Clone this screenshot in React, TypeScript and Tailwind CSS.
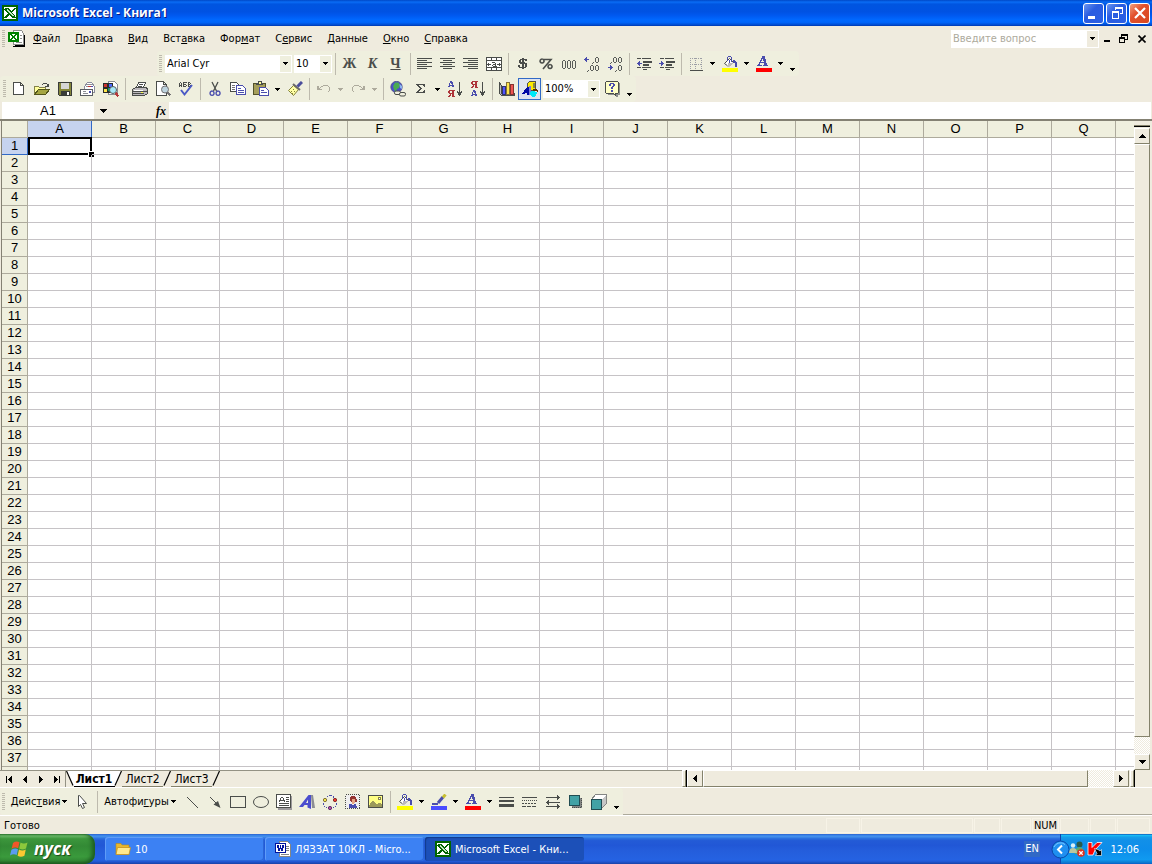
import React from "react";

const COLS = "ABCDEFGHIJKLMNOPQ".split("");
const ROWS = Array.from({ length: 37 }, (_, i) => i + 1);

type Kids = { children?: React.ReactNode };

function Ico({ children, smooth, size = 16 }: Kids & { smooth?: boolean; size?: number }) {
  return (
    <svg
      width={size}
      height={size}
      viewBox="0 0 16 16"
      fill="none"
      shapeRendering={smooth ? "auto" : "crispEdges"}
      aria-hidden="true"
      className="shrink-0"
    >
      {children}
    </svg>
  );
}

function Caret({ color = "#000" }: { color?: string }) {
  return (
    <svg width="5" height="3" viewBox="0 0 5 3" shapeRendering="crispEdges" aria-hidden="true" className="shrink-0">
      <path fill={color} d="M0 0h5v1h-5zM1 1h3v1h-3zM2 2h1v1h-1z" />
    </svg>
  );
}

function Tri({ dir }: { dir: "up" | "down" | "left" | "right" }) {
  const d = {
    up: "M3 0h1v1h-1zM2 1h3v1h-3zM1 2h5v1h-5zM0 3h7v1h-7z",
    down: "M0 0h7v1h-7zM1 1h5v1h-5zM2 2h3v1h-3zM3 3h1v1h-1z",
    left: "M0 3h1v1h-1zM1 2h1v3h-1zM2 1h1v5h-1zM3 0h1v7h-1z",
    right: "M3 3h1v1h-1zM2 2h1v3h-1zM1 1h1v5h-1zM0 0h1v7h-1z",
  }[dir];
  const wide = dir === "up" || dir === "down";
  return (
    <svg width={wide ? 7 : 4} height={wide ? 4 : 7} shapeRendering="crispEdges" aria-hidden="true" className="shrink-0">
      <path fill="#000" d={d} />
    </svg>
  );
}

function ExcelMark({ size = 16 }: { size?: number }) {
  return (
    <Ico size={size}>
      <path fill="#006500" d="M0 0h16v16h-16z" />
      <path fill="#fff" d="M2 2h12v12h-12z" />
      <path fill="#006500" d="M3 3h4v1h1v1h1v1h1v-1h1v-1h1v-1h2v1h-1v1h-1v1h-1v1h-1v1h1v1h1v1h1v2h1v1h-4v-1h-1v-1h-1v-1h-1v1h-1v1h-1v1h-3v-1h1v-1h1v-1h1v-1h1v-1h-1v-1h-1v-1h-1v-1h-1z" />
      <path fill="#c6e7c6" d="M5 4h1v1h1v1h1v1h1v1h1v1h1v1h1v1h-2v-1h-1v-1h-1v-1h-1v-1h-1v-1h-1z" />
    </Ico>
  );
}

const Sep = () => (
  <div className="flex h-[22px] w-1.5 shrink-0 justify-center">
    <div className="w-px bg-[#bdbaad]" />
  </div>
);

const Grip = () => (
  <div className="h-[18px] w-[3px] shrink-0 bg-[repeating-linear-gradient(#bdbaad_0_1px,transparent_1px_2px)]" />
);

function Tool({ label, children, on }: Kids & { label: string; on?: boolean }) {
  return (
    <button
      type="button"
      aria-label={label}
      className={
        on
          ? "flex h-[22px] w-[23px] shrink-0 items-center justify-center border border-[#3169c6] bg-[#dee3ef]"
          : "flex h-[22px] w-[23px] shrink-0 items-center justify-center"
      }
    >
      {children}
    </button>
  );
}

function Drop({ label, dim }: { label: string; dim?: boolean }) {
  return (
    <button type="button" aria-label={label} className="flex h-[22px] w-[11px] shrink-0 items-center justify-center">
      <Caret color={dim ? "#adaa9c" : "#000"} />
    </button>
  );
}

const More = () => (
  <button type="button" aria-label="Параметры панели" className="flex h-[22px] w-[13px] shrink-0 items-end justify-center pb-1">
    <Caret />
  </button>
);

function Combo({ id, label, value, width }: { id: string; label: string; value: string; width: string }) {
  return (
    <div className={"relative flex h-[18px] shrink-0 items-stretch bg-white " + width}>
      <select id={id} aria-label={label} className="w-full appearance-none bg-transparent pr-3 pl-0.5 outline-none">
        <option>{value}</option>
      </select>
      <span className="pointer-events-none absolute top-px right-px bottom-px flex w-[11px] items-center justify-center bg-[#efefde]">
        <Caret />
      </span>
    </div>
  );
}

/* ---------- shared drawing pieces ---------- */

/** Turns rows of "#" marks into one path of unit-high runs. */
function bits(rows: string[]) {
  let d = "";
  rows.forEach((row, y) => {
    for (const m of row.matchAll(/#+/g)) d += `M${m.index} ${y}h${m[0].length}v1h-${m[0].length}z`;
  });
  return d;
}

const Bucket = () => (
  <Ico>
    <path fill="#fff" stroke="#4a4d4a" d="M7.500 2.500L2.500 7.500L6.500 10.500L11.500 6.500L7.500 2.500" shapeRendering="auto" />
    <path fill="#bdbabd" d="M6 7h5v1h-1v1h-1v1h-2v1h-1v-1h-1v-1h1z" />
    <path fill="#4a4dad" d="M6 0h3v1h-3zM5 1h1v4h-1zM9 1h1v5h-1zM7 4h1v3h-1zM11 4h2v1h1v1h1v5h-2v-4h-2z" />
    <path fill="#ff0" d="M0 12h16v4h-16z" />
  </Ico>
);

const FontColor = () => (
  <Ico>
    <path
      fill="#4a4dad"
      d={bits([
        "......###",
        "......###",
        ".....####",
        ".....#.###",
        "....##.###",
        "....#...##",
        "...#######",
        "...#....###",
        "..##....###",
        ".#####.#####",
      ])}
    />
    <path fill="#f00" d="M0 12h16v4h-16z" />
  </Ico>
);

const Indent = ({ back }: { back?: boolean }) => (
  <Ico>
    <path fill="#4a4d4a" d="M1 2h14v1h-14zM7 5h9v2h-9zM7 8h6v2h-6zM1 11h14v1h-14zM7 13h4v1h-4z" />
    <path fill="#efefde" d="M5 2h1v1h-1zM5 11h1v1h-1z" />
    <path fill="#4a4dad" d={back ? "M1 7h5v1h-5zM2 6h1v3h-1zM3 5h1v5h-1z" : "M0 7h5v1h-5zM3 6h1v3h-1zM2 5h1v5h-1z"} />
  </Ico>
);

const ZERO = "M1 0h2v1h-2zM0 1h1v4h-1zM3 1h1v4h-1zM1 5h2v1h-2z";
const TALL_ZERO = "M1 0h2v1h-2zM0 1h1v7h-1zM3 1h1v7h-1zM1 8h2v1h-2z";
const COMMA = "M1 0h1v1h-1zM0 1h1v1h-1z";

const Decimals = ({ more }: { more?: boolean }) => (
  <Ico>
    <g fill="#5a5d5a">
      <path d={ZERO} transform="translate(11 1)" />
      <path d={ZERO} transform="translate(11 9)" />
      <path d={ZERO} transform={more ? "translate(6 9)" : "translate(6 1)"} />
      <path d={COMMA} transform={more ? "translate(8 6)" : "translate(3 6)"} />
      <path d={COMMA} transform={more ? "translate(3 14)" : "translate(8 14)"} />
    </g>
    <path
      fill="#4a4dad"
      d={more ? "M0 3h5v1h-5zM1 2h1v3h-1zM2 1h1v5h-1z" : "M1 11h5v1h-5zM4 10h1v3h-1zM3 9h1v5h-1z"}
    />
  </Ico>
);

const Sort = ({ desc }: { desc?: boolean }) => {
  const a = bits(["..##...", "..###..", ".#.##..", ".#..#..", ".#####.", "##..##."]);
  const ya = bits([".######", "##..##.", "##..##.", ".#####.", "..#.##.", ".##.##.", "##..###"]);
  return (
    <Ico>
      <path fill={desc ? "#ad3439" : "#4a4dad"} d={desc ? ya : a} transform="translate(1 0)" />
      <path fill={desc ? "#4a4dad" : "#ad3439"} d={desc ? a : ya} transform="translate(1 9)" />
      <path fill="#4a4d4a" d="M12 1h1v14h-1zM10 10h1v2h-1zM11 11h1v3h-1zM13 11h1v3h-1zM14 10h1v2h-1z" />
    </Ico>
  );
};

const Align = ({ d }: { d: string }) => (
  <Ico>
    <path stroke="#4a4d4a" d={d} />
  </Ico>
);

const MENU: [string, string, string][] = [
  ["", "Ф", "айл"],
  ["", "П", "равка"],
  ["", "В", "ид"],
  ["Вст", "а", "вка"],
  ["Фор", "м", "ат"],
  ["С", "е", "рвис"],
  ["", "Д", "анные"],
  ["", "О", "кно"],
  ["", "С", "правка"],
];

function TitleBar() {
  const btn = "flex h-[21px] w-[21px] items-center justify-center rounded-[3px] border border-white";
  return (
    <header className="flex h-[26px] shrink-0 items-center bg-[linear-gradient(#0048c6_0,#0a6cf5_8%,#0055e0_16%,#0052e3_45%,#0059f0_60%,#0068ff_76%,#0065fa_86%,#0050d8_94%,#0038b0_100%)] pr-0.5 pl-0.5">
      <ExcelMark />
      <h1 className="ml-1 font-['Open_Sans','Noto_Sans',sans-serif] text-[12px] leading-4 font-bold text-white [text-shadow:1px_1px_0_#0a1883]">
        Microsoft Excel - Книга1
      </h1>
      <div className="ml-auto flex gap-0.5">
        <button type="button" aria-label="Свернуть" className={btn + " bg-[linear-gradient(135deg,#6b96f0,#2a5ce0_40%,#2c60e4)]"}>
          <Ico>
            <path fill="#fff" d="M2 11h7v3h-7z" />
          </Ico>
        </button>
        <button type="button" aria-label="Восстановить" className={btn + " bg-[linear-gradient(135deg,#6b96f0,#2a5ce0_40%,#2c60e4)]"}>
          <Ico>
            <path fill="#fff" d="M6 2h8v7h-3v-1h2v-4h-6v1h-1zM3 6h7v8h-7zM4 8v5h5v-5z" fillRule="evenodd" />
          </Ico>
        </button>
        <button type="button" aria-label="Закрыть" className={btn + " bg-[linear-gradient(135deg,#f0a080,#e2502c_40%,#d8481e)]"}>
          <Ico smooth>
            <path stroke="#fff" strokeWidth="2.200" d="M3 3l10 10M13 3l-10 10" />
          </Ico>
        </button>
      </div>
    </header>
  );
}

function MenuBar() {
  return (
    <nav className="flex h-[25px] shrink-0 items-center pl-0.5">
      <Grip />
      <svg width="17" height="17" viewBox="0 0 17 17" shapeRendering="crispEdges" aria-hidden="true" className="ml-[3px] shrink-0">
        <path fill="#000" d="M7 14h10v3h-12v-1h2zM15 5h2v12h-2z" />
        <path fill="#fff" stroke="#8c8e8c" d="M5.500 .5h8l2 3v11h-10z" />
        <path fill="#8c8e8c" d="M12 5h2v1h-2zM12 8h2v1h-2zM8 12h6v1h-6z" />
        <path fill="#008200" d="M0 2h11v10h-11z" />
        <path fill="#fff" d="M2 4h7v6h-7z" />
        <path fill="#008200" d="M2 4h2v1h1v1h1v-1h1v-1h2v1h-1v1h-1v2h1v1h1v1h-2v-1h-1v-1h-1v1h-1v1h-2v-1h1v-1h1v-2h-1v-1h-1z" />
      </svg>
      <div className="ml-2 flex gap-[15px]">
        {MENU.map(([a, u, b]) => (
          <button key={a + u + b} type="button">
            {a}
            <span className="underline">{u}</span>
            {b}
          </button>
        ))}
      </div>
      <div className="ml-auto flex h-[18px] w-[148px] bg-white p-px">
        <input
          aria-label="Введите вопрос"
          placeholder="Введите вопрос"
          className="min-w-0 flex-1 bg-transparent pl-px outline-none placeholder:text-[#adaa9c] placeholder:opacity-100"
        />
        <button type="button" aria-label="Список вопросов" className="flex w-[11px] items-center justify-center bg-[#efebde]">
          <Caret />
        </button>
      </div>
      <div className="flex">
        <button type="button" aria-label="Свернуть книгу" className="flex w-4 justify-center">
          <svg width="8" height="8" viewBox="0 0 8 8" aria-hidden="true">
            <path d="M1 6h6v2h-6z" />
          </svg>
        </button>
        <button type="button" aria-label="Восстановить книгу" className="flex w-4 justify-center">
          <svg width="9" height="9" viewBox="0 0 9 9" shapeRendering="crispEdges" aria-hidden="true">
            <path fillRule="evenodd" d="M2 0h7v6h-3v-1h2v-3h-5v1h-1zM0 3h6v6h-6zM1 5v3h4v-3z" />
          </svg>
        </button>
        <button type="button" aria-label="Закрыть книгу" className="flex w-[21px] items-center justify-center">
          <svg width="8" height="8" viewBox="0 0 8 8" aria-hidden="true">
            <path stroke="#000" strokeWidth="1.600" d="M.5 .5l7 7M7.500 .5l-7 7" />
          </svg>
        </button>
      </div>
    </nav>
  );
}

function FormatBar() {
  const letter = "font-['Liberation_Serif',serif] text-[14px] leading-4 font-bold text-[#4a4d4a]";
  return (
    <div className="flex h-[25px] shrink-0 pl-[157px]">
      <div className="flex items-center rounded-sm bg-[#efefde] pl-0.5">
        <Grip />
        <div className="w-[3px]" />
        <Combo id="font" label="Шрифт" value="Arial Cyr" width="w-[127px]" />
        <div className="w-0.5" />
        <Combo id="size" label="Размер" value="10" width="w-[38px]" />
        <Sep />
        <Tool label="Полужирный"><span className={letter}>Ж</span></Tool>
        <Tool label="Курсив"><span className={letter + " italic"}>К</span></Tool>
        <Tool label="Подчеркнутый"><span className={letter + " underline"}>Ч</span></Tool>
        <Sep />
        <Tool label="По левому краю"><Align d="M0 2.500h15M0 4.500h10M0 6.500h15M0 8.500h10M0 10.500h15M0 12.500h10" /></Tool>
        <Tool label="По центру"><Align d="M0 2.500h15M3 4.500h9M0 6.500h15M3 8.500h9M0 10.500h15M3 12.500h9" /></Tool>
        <Tool label="По правому краю"><Align d="M0 2.500h15M5 4.500h10M0 6.500h15M5 8.500h10M0 10.500h15M5 12.500h10" /></Tool>
        <Tool label="Объединить и поместить в центре">
          <Ico>
            <path fill="#fff" stroke="#4a4d4a" d="M.5 1.500h15v13h-15zM.5 4.500h15M.5 11.500h15M5.500 1.500v3M10.500 1.500v3M5.500 11.500v3M10.500 11.500v3" />
            <path
              fill="#4a4d4a"
              d="M1 8h4v1h-4zM2 7h1v3h-1zM11 8h4v1h-4zM13 7h1v3h-1zM6 6h3v1h-3zM9 7h1v3h-1zM7 8h2v1h-2zM6 9h1v1h-1zM7 10h4v1h-4z"
            />
          </Ico>
        </Tool>
        <Sep />
        <Tool label="Денежный формат">
          <Ico>
            <path
              fill="#4a4d4a"
              transform="translate(3 2)"
              d={bits([
                "....##",
                "..#######",
                ".##.##.##",
                ".##.##",
                ".######",
                "..#######",
                "....##.##",
                "##..##.##",
                "##..##.##",
                ".#######",
                "....##",
              ])}
            />
          </Ico>
        </Tool>
        <Tool label="Процентный формат">
          <Ico smooth>
            <path stroke="#4a4d4a" strokeWidth="1.600" d="M4 3a2 2 0 1 0 .1 0M5 3.500h8L5 13M12 8.500a2 2 0 1 0 .1 0" />
          </Ico>
        </Tool>
        <Tool label="Формат с разделителями">
          <Ico>
            <g fill="#5a5d5a">
              <path d={TALL_ZERO} transform="translate(1 4)" />
              <path d={TALL_ZERO} transform="translate(6 4)" />
              <path d={TALL_ZERO} transform="translate(11 4)" />
            </g>
          </Ico>
        </Tool>
        <Tool label="Увеличить разрядность"><Decimals more /></Tool>
        <Tool label="Уменьшить разрядность"><Decimals /></Tool>
        <Sep />
        <Tool label="Уменьшить отступ"><Indent back /></Tool>
        <Tool label="Увеличить отступ"><Indent /></Tool>
        <Sep />
        <Tool label="Границы">
          <Ico>
            <path stroke="#9c9ea5" strokeDasharray="1 1" d="M2 2.500h12M2 8.500h12M2.500 2v12M7.500 2v12M13.500 2v12" />
            <path fill="#4a4d4a" d="M2 14h13v1h-13z" />
          </Ico>
        </Tool>
        <Drop label="Виды границ" />
        <Tool label="Цвет заливки"><Bucket /></Tool>
        <Drop label="Выбор цвета заливки" />
        <Tool label="Цвет шрифта"><FontColor /></Tool>
        <Drop label="Выбор цвета шрифта" />
        <More />
      </div>
    </div>
  );
}

function StandardBar() {
  return (
    <div className="flex h-[26px] shrink-0">
      <div className="flex items-center rounded-sm bg-[#efefde] pl-[3px]">
        <Grip />
        <div className="w-px" />
        <Tool label="Создать">
          <Ico>
            <path fill="#fff" stroke="#4a4d4a" d="M2.500 1.500h7l3 3v9h-10zM9.500 1.500v3h3" />
          </Ico>
        </Tool>
        <Tool label="Открыть">
          <Ico>
            <path fill="#ffff9c" stroke="#84824a" d="M.5 13.500v-8h4l1 1h6v2" />
            <path fill="#a5a642" stroke="#52551a" d="M.5 13.500l4-5h11l-4 5z" />
            <path fill="#4a4d4a" d="M8 3h1v1h-1zM9 2h4v1h-4zM13 3h1v2h-1zM11 5h4v1h-4zM14 3h1v3h-1z" />
          </Ico>
        </Tool>
        <Tool label="Сохранить">
          <Ico>
            <path fill="#84863a" stroke="#393c39" d="M1.500 1.500h13v13h-12l-1-1z" />
            <path fill="#d6d7d6" d="M4 2h8v6h-8z" />
            <path fill="#393c39" d="M4 10h9v4h-9z" />
            <path fill="#fff" d="M10 11h2v3h-2z" />
          </Ico>
        </Tool>
        <Tool label="Сообщение">
          <Ico>
            <path fill="#fff" stroke="#8c8e9c" d="M4.500 5.500l3-4h4l3 4v6h-10z" />
            <path fill="#fff" stroke="#5a5d63" d="M.5 8.500h12v6h-12z" />
            <path stroke="#8c8e94" d="M3 10.500h3M3 12.500h5M7 3.500h5M6 5.500h2" />
            <path fill="#4a4dad" d="M9 10h2v2h-2zM11 5h2v1h-2z" />
            <path fill="#c63431" d="M8 5h3v1h-3z" />
          </Ico>
        </Tool>
        <Tool label="Поиск">
          <Ico>
            <path fill="#fff" stroke="#8c8e94" d="M5.500 .5h6l3 3v10h-9z" />
            <path fill="#292c29" d="M0 2h10v10h-10z" />
            <path fill="#ce3431" d="M1 3h3v3h-3z" />
            <path fill="#4a69ff" d="M6 3h3v3h-3z" />
            <path fill="#ffe74a" d="M1 8h3v3h-3z" />
            <path fill="#00a26b" d="M5 7h3v3h-3z" />
            <circle cx="10" cy="9" r="3.500" fill="#a5e7f7" stroke="#5a5d5a" shapeRendering="auto" />
            <path stroke="#b5383a" strokeWidth="2.500" d="M12.500 12l3 3.500" />
          </Ico>
        </Tool>
        <Sep />
        <Tool label="Печать">
          <Ico>
            <path fill="#fff" stroke="#4a4d4a" d="M4.500 6.500l2-5h7l-2 5z" />
            <path fill="#bdbabd" stroke="#4a4d4a" d="M.5 8.500l3-2h11l1 2v4l-3 2h-12z" />
            <path stroke="#4a4d4a" d="M7 3.500h4M6 5.500h4M1 10.500h14M1 12.500h11" />
            <path fill="#fff" d="M2 9h9v1h-9z" />
            <path fill="#ffff4a" d="M9 11h2v1h-2z" />
          </Ico>
        </Tool>
        <Tool label="Предварительный просмотр">
          <Ico>
            <path fill="#fff" stroke="#4a4d4a" d="M1.500 .5h7l3 3v11h-10zM8.500 .5v3h3" />
            <circle cx="10" cy="8.500" r="3.500" fill="#bdd3de" stroke="#737173" shapeRendering="auto" />
            <path stroke="#737173" strokeWidth="2" d="M12.500 11.500l3 3" />
          </Ico>
        </Tool>
        <Tool label="Орфография">
          <Ico>
            <path
              fill="#4a4d4a"
              transform="translate(1 1)"
              d={bits([".#..####.##", "#.#.#....#.#", "#.#.###..##", "###.#..#.#.#", "#.#.###..##"])}
            />
            <path stroke="#4a59c6" strokeWidth="2" d="M3 9l3.500 4.500L14 4" shapeRendering="auto" />
          </Ico>
        </Tool>
        <Sep />
        <Tool label="Вырезать">
          <Ico smooth>
            <path stroke="#4a4d4a" strokeWidth="1.300" d="M5 1l4.500 9M11 1L6.500 10" />
            <path stroke="#4a4dad" strokeWidth="1.400" d="M5 10a2 2.200 0 1 0 .1 0M11 10a2 2.200 0 1 0 .1 0" />
          </Ico>
        </Tool>
        <Tool label="Копировать">
          <Ico>
            <path fill="#fff" stroke="#4a4d4a" d="M.5 1.500h6l3 3v6h-9z" />
            <path fill="#fff" stroke="#4a4dad" d="M6.500 4.500h6l3 3v6h-9z" />
            <path stroke="#737173" d="M2 4.500h3M2 6.500h3M2 8.500h3" />
            <path stroke="#4a4dad" d="M8 7.500h3M8 9.500h6M8 11.500h6" />
          </Ico>
        </Tool>
        <Tool label="Вставить">
          <Ico>
            <path fill="#a59e5a" stroke="#52512a" d="M.5 2.500h12v11h-12z" />
            <path fill="#ffff9c" stroke="#4a4d4a" d="M3.500 3.500v-1h1.500v-2h3v2h1.500v1z" />
            <path fill="#fff" stroke="#4a4dad" d="M6.500 6.500h6l3 3v5h-9z" />
            <path stroke="#4a4dad" d="M8 9.500h3M8 11.500h6" />
          </Ico>
        </Tool>
        <Drop label="Параметры вставки" />
        <Tool label="Формат по образцу">
          <Ico>
            <path fill="#ffffa5" stroke="#848239" d="M1.500 9.500l5-5l5 4l-5 6z" shapeRendering="auto" />
            <path stroke="#848239" d="M4 10.500h1M6 8.500h1M5 12.500h1M7 10.500h1" />
            <path stroke="#6b696b" strokeWidth="2" d="M6 3l7 6" shapeRendering="auto" />
            <path stroke="#4a4d9c" strokeWidth="3" d="M10.500 5.500L15 1" shapeRendering="auto" />
          </Ico>
        </Tool>
        <Sep />
        <Tool label="Отменить">
          <Ico>
            <path fill="#adaa9c" d="M2 5h1v3h3v1h-5v-4zM3 7h1v1h-1zM4 6h1v1h-1zM5 5h2v-1h5v1h1v1h1v4h-1v1h-1v-1h1v-4h-1v-1h-5v1h-2z" />
          </Ico>
        </Tool>
        <Drop label="Список отмены" dim />
        <Tool label="Вернуть">
          <Ico>
            <path fill="#adaa9c" transform="matrix(-1 0 0 1 16 0)" d="M2 5h1v3h3v1h-5v-4zM3 7h1v1h-1zM4 6h1v1h-1zM5 5h2v-1h5v1h1v1h1v4h-1v1h-1v-1h1v-4h-1v-1h-5v1h-2z" />
          </Ico>
        </Tool>
        <Drop label="Список возврата" dim />
        <Sep />
        <Tool label="Гиперссылка">
          <Ico smooth>
            <circle cx="6.500" cy="6" r="5.700" fill="#4a4dce" stroke="#4a4d7b" strokeWidth=".8" />
            <path fill="#4aaa52" d="M5 1.500h3.500l1.500 2.500l-1 3l-2 1l-1 3l-2-2L3 5z" />
            <path fill="#8cb6ef" d="M9.500 3l2.500 2v3l-2-1z" />
            <rect x="4.500" y="10" width="6" height="3.500" rx="1.500" fill="#efefde" stroke="#4a4d4a" />
            <rect x="9.500" y="11.500" width="6" height="3.500" rx="1.500" fill="#efefde" stroke="#4a4d4a" />
          </Ico>
        </Tool>
        <Tool label="Автосумма">
          <Ico>
            <path
              fill="#4a4d4a"
              transform="translate(3 3)"
              d={bits(["#########", ".##....##", "..##....#", "...##", "....##", "...##", "..##....#", ".##....##", "#########"])}
            />
          </Ico>
        </Tool>
        <Drop label="Функции автосуммы" />
        <Tool label="Сортировка по возрастанию"><Sort /></Tool>
        <Tool label="Сортировка по убыванию"><Sort desc /></Tool>
        <Sep />
        <Tool label="Мастер диаграмм">
          <Ico>
            <path fill="#bdbabd" stroke="#4a4d4a" d="M.5 1.500l2 3v8h13v2h-13l-2-2z" />
            <path fill="#5255ff" stroke="#31346b" d="M3.500 5.500h3v8h-3z" />
            <path fill="#ffe74a" stroke="#84713a" d="M7.500 1.500h3v12h-3z" />
            <path fill="#ef5552" stroke="#843431" d="M11.500 3.500h3v10h-3z" />
          </Ico>
        </Tool>
        <Tool label="Рисование" on>
          <Ico>
            <path fill="#ffeb00" stroke="#52514a" d="M5.500 2.500l2-2h6v7l-2 2h-6z" />
            <path fill="#8c8a42" d="M11 2h2v5h-2z" />
            <path fill="#0008a5" d="M0 13v-1h1v-1h1v-2h1v-1h1v-1h1v-1h2v8h-2v-2h-2v1z" />
            <path fill="#7b7dd6" d="M7 5h2v9h-2z" />
            <path fill="#00e7f7" d="M9 10h4v1h2v2h-1v2h-1v1h-3v-1h-1v-1h-1v-3h1z" />
            <path fill="#5a3000" d="M11 8h4v1h1v2h-1v-1h-4z" />
          </Ico>
        </Tool>
        <div className="w-0.5" />
        <Combo id="zoom" label="Масштаб" value="100%" width="w-[57px]" />
        <Tool label="Справка">
          <Ico>
            <path fill="#8c8e8c" d="M4 2h12v12h-2v2h-2v-2h-8z" />
            <path fill="#ffffc6" stroke="#4a4d4a" d="M2.500 .5h11l1 1v10l-1 1h-2v2l-2-2h-7l-1-1v-10z" />
            <path fill="#4a4dad" d={bits(["", "", "......####", ".....##..##", ".....##..##", "........##", ".......##", ".......##", "", ".......##", ".......##"])} />
          </Ico>
        </Tool>
        <More />
      </div>
    </div>
  );
}

function FormulaBar() {
  return (
    <div className="flex h-[17px] shrink-0 pl-0.5">
      <input
        aria-label="Имя ячейки"
        defaultValue="A1"
        className="w-[92px] bg-white text-center font-['Liberation_Sans',sans-serif] text-[13px] leading-4 outline-none"
      />
      <button type="button" aria-label="Список имен" className="flex w-[19px] items-center justify-center">
        <Tri dir="down" />
      </button>
      <button
        type="button"
        aria-label="Вставка функции"
        className="w-[56px] shrink-0 pr-[3px] text-right font-['Liberation_Serif',serif] text-[12px] leading-4 font-bold italic"
      >
        fx
      </button>
      <input aria-label="Строка формул" className="min-w-0 flex-1 bg-white outline-none" />
      <div className="w-px" />
    </div>
  );
}

const raised = "flex items-center justify-center border border-t-[#fff] border-r-[#84826b] border-b-[#84826b] border-l-[#fff] bg-[#efebde]";
const checker = "bg-[repeating-conic-gradient(#efebde_0_25%,#fff_0_50%)] bg-[length:2px_2px]";

function Sheet() {
  const head = "border-r border-b border-[#adaa9c] bg-[#efefde] p-0 text-center font-normal";
  const headOn = "border-r border-b border-[#3169c6] bg-[#c6d3ef] p-0 text-center font-normal";
  return (
    <div className="flex min-h-0 flex-1 border-t-2 border-t-[#848173] pr-0.5">
      <div className="w-0.5 shrink-0 border-r border-[#848173]" />
      <div className="min-w-0 flex-1 overflow-hidden bg-white">
        <table className="w-full table-fixed border-separate border-spacing-0 font-['Liberation_Sans',sans-serif] text-[13px] leading-4">
          <colgroup>
            <col className="w-[26px]" />
            {COLS.map((c) => (
              <col key={c} className="w-16" />
            ))}
            <col />
          </colgroup>
          <thead>
            <tr className="h-[17px]">
              <th className={head} />
              {COLS.map((c) => (
                <th key={c} scope="col" className={c === "A" ? headOn : head}>
                  {c}
                </th>
              ))}
              <th className="border-b border-[#adaa9c] bg-[#efefde] p-0" />
            </tr>
          </thead>
          <tbody>
            {ROWS.map((r) => (
              <tr key={r} className="h-[17px]">
                <th scope="row" className={r === 1 ? headOn : head}>
                  {r}
                </th>
                {COLS.map((c) => (
                  <td key={c} className="relative border-r border-b border-[#c6c3c6] p-0">
                    {r === 1 && c === "A" && (
                      <div className="absolute -top-px -right-px -bottom-px left-0 border-2 border-black">
                        <div className="absolute -right-1 -bottom-1 h-[6px] w-[6px] border-t border-l border-white bg-black" />
                      </div>
                    )}
                  </td>
                ))}
                <td className="border-b border-[#c6c3c6] p-0" />
              </tr>
            ))}
            <tr className="h-[17px]">
              <th className={head} />
              {COLS.map((c) => (
                <td key={c} className="border-r border-[#c6c3c6] p-0" />
              ))}
              <td className="p-0" />
            </tr>
          </tbody>
        </table>
      </div>
      <div className="flex w-4 shrink-0 flex-col bg-[#efebde]">
        <div className="mt-px h-1 border-b border-[#84826b] bg-[#efebde]" />
        <div className="h-px bg-black" />
        <button type="button" aria-label="Прокрутить вверх" className={"mt-px h-4 " + raised}>
          <Tri dir="up" />
        </button>
        <div className={"flex-1 " + raised} />
        <div className={"h-[17px] " + checker} />
        <button type="button" aria-label="Прокрутить вниз" className={"h-4 " + raised}>
          <Tri dir="down" />
        </button>
      </div>
    </div>
  );
}

const Slash = ({ active }: { active?: boolean }) => (
  <svg width="8" height="16" viewBox="0 0 8 16" aria-hidden="true" className="shrink-0">
    {active && <path fill="#fff" d="M0 0h7L1 15H0z" />}
    <path stroke="#000" strokeWidth="1.200" d="M7.500 0L1 14.500" />
    {active && <path stroke="#000" d="M0 15.500h1" />}
  </svg>
);

function TabStrip() {
  const nav = "flex w-4 shrink-0 items-center justify-center";
  return (
    <div className="flex h-[17px] shrink-0 pr-0.5">
      <div className="flex min-w-0 flex-[682] border-t border-[#949284] pl-px text-[12px] leading-4">
        <button type="button" aria-label="Первый лист" className={nav}>
          <span className="mr-px h-[7px] w-px bg-black" />
          <Tri dir="left" />
        </button>
        <button type="button" aria-label="Предыдущий лист" className={nav}><Tri dir="left" /></button>
        <button type="button" aria-label="Следующий лист" className={nav}><Tri dir="right" /></button>
        <button type="button" aria-label="Последний лист" className={nav}>
          <Tri dir="right" />
          <span className="ml-px h-[7px] w-px bg-black" />
        </button>
        <div className="w-px shrink-0 bg-[#949284]" />
        <svg width="8" height="16" viewBox="0 0 8 16" aria-hidden="true" className="shrink-0">
          <path fill="#fff" d="M1 0h7v15h-1z" />
          <path stroke="#000" strokeWidth="1.200" d="M.5 0L7 14.500" />
        </svg>
        <button type="button" className="w-10 shrink-0 border-b border-black bg-white font-bold">Лист1</button>
        <Slash active />
        <button type="button" className="w-[41px] shrink-0 border-b border-[#84826b]">Лист2</button>
        <Slash />
        <button type="button" className="w-[41px] shrink-0 border-b border-[#84826b]">Лист3</button>
        <Slash />
      </div>
      <div className="flex flex-[453]">
        <div className={"w-1 shrink-0 " + raised} />
        <div className="w-px shrink-0 bg-black" />
        <button type="button" aria-label="Прокрутить влево" className={"w-4 shrink-0 " + raised}><Tri dir="left" /></button>
        <div className={"flex-1 " + raised} />
        <div className={"w-[25px] shrink-0 " + checker} />
        <button type="button" aria-label="Прокрутить вправо" className={"w-4 shrink-0 " + raised}><Tri dir="right" /></button>
        <div className={"ml-px w-1 shrink-0 " + raised} />
        <div className="w-px shrink-0 bg-black" />
      </div>
      <div className="w-[15px] shrink-0" />
    </div>
  );
}

function DrawBar() {
  return (
    <div className="flex h-[28px] shrink-0 border-t border-white">
      <div className="flex items-center rounded-sm bg-[#efefde] pl-0.5">
        <Grip />
        <button type="button" className="ml-0.5 flex w-16 items-center justify-center gap-0.5">
          <span>Дейс<span className="underline">т</span>вия</span>
          <Caret />
        </button>
        <Tool label="Выбор объектов">
          <Ico>
            <path fill="#fff" stroke="#4a4d4a" d="M4.500 1.500l7 8h-4l2 4l-2 1l-2-4l-2 2v-11z" shapeRendering="auto" />
          </Ico>
        </Tool>
        <Sep />
        <button type="button" className="flex w-20 items-center justify-center gap-0.5">
          <span>Автофи<span className="underline">г</span>уры</span>
          <Caret />
        </button>
        <Tool label="Линия"><Ico smooth><path stroke="#4a4d4a" d="M3 3l11 11" /></Ico></Tool>
        <Tool label="Стрелка">
          <Ico smooth>
            <path stroke="#4a4d4a" d="M3 3l8 8" />
            <path fill="#4a4d4a" d="M13.500 14L6.500 10.500L11 7z" />
          </Ico>
        </Tool>
        <Tool label="Прямоугольник"><Ico><path stroke="#4a4d4a" d="M.5 2.500h15v11h-15z" /></Ico></Tool>
        <Tool label="Овал"><Ico smooth><ellipse cx="8" cy="8" rx="7.500" ry="5.500" stroke="#4a4d4a" /></Ico></Tool>
        <Tool label="Надпись">
          <Ico>
            <path fill="#9c9a9c" d="M2 2h14v14h-14z" />
            <path fill="#fff" stroke="#4a4d4a" d="M.5 .5h14v13h-14z" />
            <path
              fill="#4a4d4a"
              d="M5 3h2v1h-2zM4 4h1v2h-1zM7 4h1v2h-1zM3 6h6v1h-6zM3 7h1v1h-1zM8 7h1v1h-1zM10 3h3v1h-3zM10 5h3v1h-3zM10 7h3v1h-3zM3 9h10v1h-10zM3 11h10v1h-10z"
            />
          </Ico>
        </Tool>
        <Tool label="Объект WordArt">
          <Ico smooth>
            <path fill="#8c8e94" d="M12 1h2l2 13h-3z" />
            <path fill="#4a4dce" d="M9.500 1H12v14L8.500 13.500V11H5.500L4 13H0zM9 5.500L7 9h2z" />
          </Ico>
        </Tool>
        <Tool label="Диаграмма">
          <Ico>
            <path fill="#4a4dad" d="M5 2h1v1h-1zM7 1h3v1h-3zM11 2h1v2h-1zM1 9h1v2h-1zM2 12h1v1h-1zM4 13h1v1h-1zM14 9h1v2h-1zM13 12h1v1h-1zM11 13h1v1h-1z" />
            <path fill="#efe74a" stroke="#84713a" d="M2 4.500h2l.5.5v2l-.5.5h-2l-.5-.5v-2z" shapeRendering="auto" />
            <path fill="#ef3431" stroke="#84342a" d="M12 4.500h2l.5.5v2l-.5.5h-2l-.5-.5v-2z" shapeRendering="auto" />
            <path fill="#ad4da5" stroke="#63346b" d="M7 12.500h2l.5.5v2l-.5.5h-2l-.5-.5v-2z" shapeRendering="auto" />
          </Ico>
        </Tool>
        <Tool label="Картинка">
          <Ico>
            <path fill="#efefef" stroke="#4a4d4a" strokeDasharray="1 1" d="M.5 .5h14v14h-14z" />
            <path fill="#943431" d="M6 2h4v1h1v2h1v3h-2v-3h-3v3h-1v-1h-1v-4h1z" />
            <path fill="#e7a684" d="M7 5h3v4h-1v1h-2z" />
            <path fill="#4a4dad" d="M4 10h3v1h2v-1h2v2h1v2h-8z" />
          </Ico>
        </Tool>
        <Tool label="Рисунок">
          <Ico>
            <path fill="#ffff84" stroke="#4a4d4a" d="M.5 1.500h14v12h-14z" />
            <path fill="#9c9a5a" d="M1 11h1v-2h1v-1h1v-1h2v1h1v1h1v1h2v-1h3v1h1v3h-13z" />
            <path fill="#fff" stroke="#84824a" d="M10.500 3.500h2v2h-2z" />
          </Ico>
        </Tool>
        <Sep />
        <Tool label="Заливка фигуры"><Bucket /></Tool>
        <Drop label="Выбор заливки" />
        <Tool label="Цвет линий">
          <Ico>
            <path fill="#4a4dff" d="M0 12h16v4h-16z" />
            <path stroke="#4a4dad" strokeWidth="3" d="M7 9l5-6" shapeRendering="auto" />
            <path stroke="#c6be31" strokeWidth="3" d="M12 3.500l2.500-3" shapeRendering="auto" />
            <path fill="#4a4dad" d="M1 9h6v2h-6z" />
          </Ico>
        </Tool>
        <Drop label="Выбор цвета линий" />
        <Tool label="Цвет текста"><FontColor /></Tool>
        <Drop label="Выбор цвета текста" />
        <Tool label="Тип линии">
          <Ico><path fill="#4a4d4a" d="M0 3h15v1h-15zM0 6h15v2h-15zM0 10h15v3h-15z" /></Ico>
        </Tool>
        <Tool label="Тип штриха">
          <Ico>
            <path stroke="#4a4d4a" d="M0 3.500h15" />
            <path stroke="#4a4d4a" strokeDasharray="1 1" d="M0 6.500h15" />
            <path stroke="#4a4d4a" strokeDasharray="2 1" d="M0 9.500h15" />
            <path stroke="#4a4d4a" strokeDasharray="4 1" d="M0 12.500h15" />
          </Ico>
        </Tool>
        <Tool label="Вид стрелки">
          <Ico>
            <path
              fill="#4a4d4a"
              d="M1 3h14v1h-14zM1 8h14v1h-14zM1 12h14v1h-14zM12 1h1v5h-1zM13 2h1v3h-1zM3 6h1v5h-1zM2 7h1v3h-1zM12 10h1v5h-1zM13 11h1v3h-1z"
            />
          </Ico>
        </Tool>
        <Tool label="Тень">
          <Ico>
            <path fill="#848684" d="M4 4h10v10h-10z" />
            <path stroke="#4a4d4a" strokeDasharray="1 1" d="M4 13.500h10M13.500 4v10" />
            <path fill="#42a2a5" stroke="#214d52" d="M1.500 1.500h10v10h-10z" />
          </Ico>
        </Tool>
        <Tool label="Объем">
          <Ico>
            <path fill="#fff" stroke="#848684" d="M.5 5.500l4-5h11v9l-5 5" />
            <path fill="#c6c7c6" d="M11 5l4-4v8l-4 5z" />
            <path fill="#42a2a5" stroke="#214d52" d="M.5 5.500h10v10h-10z" />
          </Ico>
        </Tool>
        <More />
      </div>
      <div className="flex-1 border-b border-[#adaa9c]" />
    </div>
  );
}

function StatusBar() {
  const cell = "h-[15px] shrink-0 border border-[#f7f3e7]";
  return (
    <div className="flex h-[19px] shrink-0 items-center gap-px border-t border-white pt-px pr-0.5 pl-1">
      <span className="mr-auto">Готово</span>
      <div className={cell + " w-[34px]"} />
      <div className={cell + " w-[112px]"} />
      <div className={cell + " w-[26px]"} />
      <div className={cell + " w-[30px]"} />
      <div className={cell + " flex w-[27px] items-center justify-center"}>NUM</div>
      <div className={cell + " w-[29px]"} />
      <div className={cell + " w-[26px]"} />
      <div className={cell + " w-[33px]"} />
    </div>
  );
}

function TaskBar() {
  const task = "flex h-6 w-[159px] shrink-0 items-center gap-1 rounded-[3px] pl-2.5 text-white";
  return (
    <footer className="flex h-[30px] shrink-0 items-center bg-[linear-gradient(#2a62cc_0,#3a85ea_5%,#4490ea_9%,#2b70e0_15%,#235bd6_22%,#2157d6_38%,#245ddb_54%,#2562e2_86%,#2158d4_92%,#1941a5_100%)] text-[11px]">
      <button
        type="button"
        className="flex h-full w-[95px] shrink-0 items-center gap-1 rounded-r-[10px] bg-[linear-gradient(#2f7d32_0,#6cbb6a_6%,#3c963c_16%,#338a35_40%,#3a9a3c_75%,#348c37_90%,#1f5e22_100%)] pl-2.5 shadow-[inset_-3px_-1px_4px_#1d5c20] text-white"
      >
        <svg width="20" height="20" viewBox="0 0 20 20" aria-hidden="true">
          <path fill="#f0572a" d="M3 4q3-2.500 6.500-.8L8.200 9.200Q5 7.500 1.600 9.800z" />
          <path fill="#8cc83c" d="M10.500 3.600q3.500 1.800 7-.2L16 9.600q-3.500 2-6.800 0z" />
          <path fill="#5a9cf0" d="M1.400 10.800q3.400-2.300 6.600-.6L6.700 16Q3.400 14.200 0 16.600z" />
          <path fill="#fcc832" d="M9 10.600q3.300 2 6.800 0L14.400 16.700q-3.500 2-6.800 0z" />
        </svg>
        <span className="font-['Open_Sans','Noto_Sans',sans-serif] text-[17px] leading-6 font-bold italic [text-shadow:1px_1px_1px_#1a4a1c]">пуск</span>
      </button>
      <div className="ml-2.5 flex min-w-0 flex-1 gap-px">
        <button type="button" className={task + " bg-[#3c81f3] shadow-[inset_1px_1px_0_#5f9cf8,inset_-1px_-1px_0_#2a66d8]"}>
          <Ico smooth>
            <path fill="#e8b830" stroke="#b88a18" strokeWidth=".6" d="M1 2.500h5l1 1.500h7v9H1z" />
            <path fill="#ffe88c" stroke="#c8921a" d="M2.500 6.500h13L14 13.500H1z" strokeWidth=".8" />
          </Ico>
          <span className="pt-px">10</span>
        </button>
        <button type="button" className={task + " bg-[#3c81f3] shadow-[inset_1px_1px_0_#5f9cf8,inset_-1px_-1px_0_#2a66d8]"}>
          <Ico>
            <path fill="#fff" stroke="#848684" d="M4.500 .5h8l3 3v12h-11z" />
            <path stroke="#848684" d="M11 5.500h3M11 7.500h3M11 9.500h3M6 13.500h8" />
            <path fill="#fff" stroke="#00149c" d="M.5 2.500h10v9h-10z" />
            <path fill="#00149c" transform="translate(2 4)" d={bits(["##.#.##", "##.#.##", "##.#.##", ".#####", ".##.##", ".##.##"])} />
          </Ico>
          <span className="pt-px whitespace-nowrap">ЛЯЗЗАТ 10КЛ - Micro...</span>
        </button>
        <button type="button" className={task + " bg-[#1c50b8] shadow-[inset_1px_1px_1px_#123a8c]"}>
          <ExcelMark />
          <span className="pt-px whitespace-nowrap">Microsoft Excel - Кни...</span>
        </button>
      </div>
      <button type="button" aria-label="Язык" className="mr-5 h-4 w-4 bg-[#3169c6] text-white">
        <span className="flex justify-center">EN</span>
      </button>
      <div className="relative flex h-full w-[92px] shrink-0 items-center border-l border-[#1042af] bg-[linear-gradient(#0c59b9_0,#18baf5_5%,#139ee9_10%,#1290e8_20%,#0d8dea_50%,#109af0_85%,#0c7ad0_95%,#095bc9_100%)] pr-[13px] pl-2 text-white">
        <button type="button" aria-label="Показать значки" className="absolute top-1.5 -left-2.5 h-[19px] w-[19px]">
          <svg width="19" height="19" viewBox="0 0 19 19" aria-hidden="true">
            <circle cx="9.500" cy="9.500" r="8.500" fill="#1f8ff0" stroke="#0a48a8" />
            <path fill="none" stroke="#7cc8ff" d="M3 7a7 7 0 0 1 11-2.500" />
            <path fill="none" stroke="#fff" strokeWidth="2" d="M11 5.500l-4 4l4 4" />
          </svg>
        </button>
        <Ico smooth>
          <circle cx="10.500" cy="3.500" r="3" fill="#2a5a4a" />
          <path fill="#5aa86a" d="M6 13q0-7 4.500-7t4.500 7z" />
          <circle cx="4" cy="4.500" r="2.200" fill="#d8f0f8" />
          <path fill="#b8c8a0" d="M0 12q0-5 4-5t4 5z" />
          <circle cx="12" cy="12" r="3.800" fill="#e03020" />
          <path stroke="#fff" strokeWidth="1.300" d="M10.300 10.300l3.400 3.400M13.700 10.300l-3.400 3.400" />
        </Ico>
        <span className="w-0.5 shrink-0" />
        <Ico smooth>
          <path fill="#f00" stroke="#fff" strokeWidth=".8" d="M1 1.500h4v5l5-5h5l-7 7.500l-2 5H1z" />
          <path fill="#000" stroke="#fff" strokeWidth=".6" d="M7.500 7.500l3.500 1l2 1.500l1.500-1.500v6h-6l1.500-2z" />
        </Ico>
        <time className="ml-auto pt-px">12:06</time>
      </div>
    </footer>
  );
}

export default function App() {
  return (
    <div className="flex h-screen flex-col overflow-hidden bg-[#efebde] font-['DejaVu_Sans_Condensed','Noto_Sans',sans-serif] text-[11px] leading-[14px] text-black">
      <TitleBar />
      <MenuBar />
      <FormatBar />
      <StandardBar />
      <FormulaBar />
      <Sheet />
      <TabStrip />
      <DrawBar />
      <StatusBar />
      <TaskBar />
    </div>
  );
}
